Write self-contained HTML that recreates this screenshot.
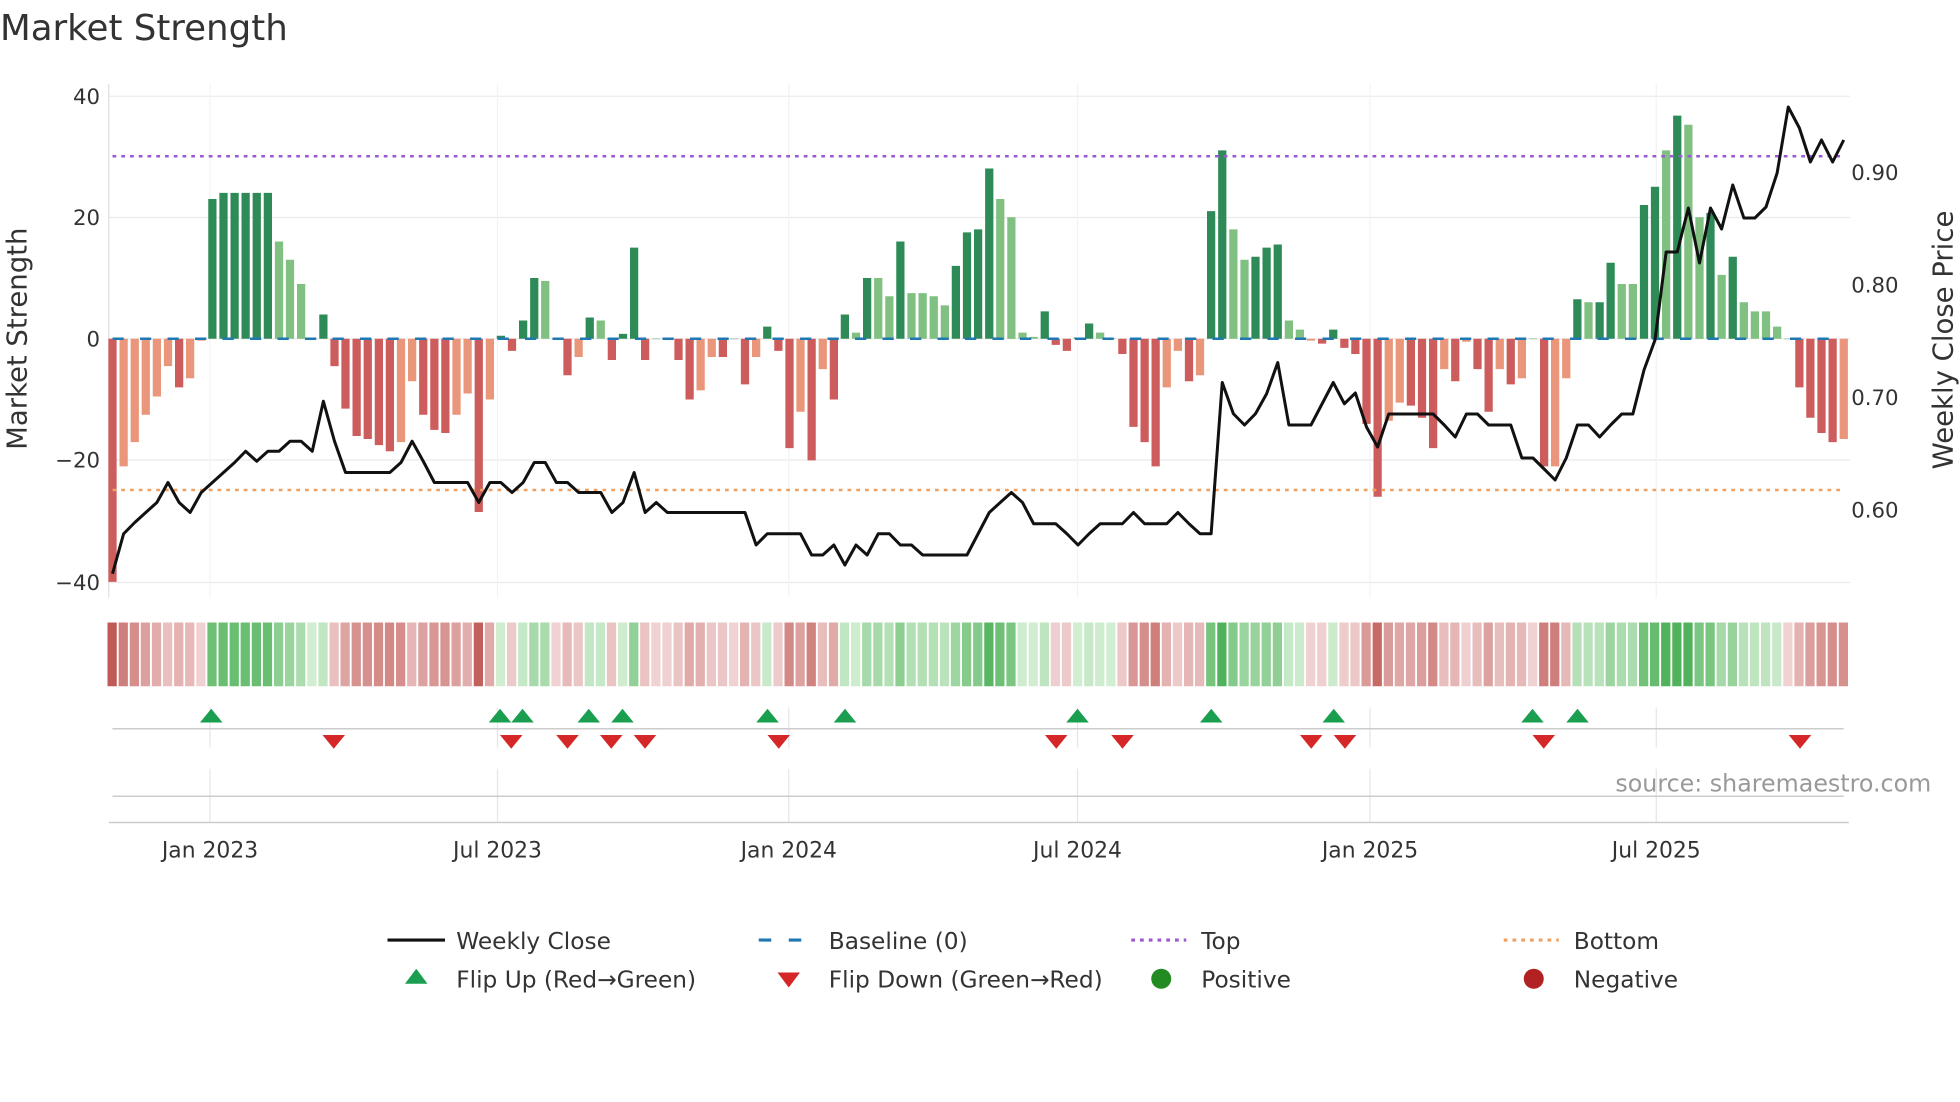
<!DOCTYPE html>
<html><head><meta charset="utf-8">
<style>
html,body{margin:0;padding:0;background:#fff;width:1960px;height:1102px;overflow:hidden}
svg{display:block;font-family:"DejaVu Sans","Liberation Sans",sans-serif}
</style></head>
<body>
<svg id="s" width="1960" height="1102" viewBox="0 0 1568 881.6" xmlns="http://www.w3.org/2000/svg">
<text x="0" y="32" font-size="28.5" fill="#333">Market Strength</text>
<g id="g"></g>
<text transform="translate(21,271) rotate(-90)" font-size="22" fill="#333" text-anchor="middle">Market Strength</text>
<text transform="translate(1562,272) rotate(-90)" font-size="22" fill="#333" text-anchor="middle">Weekly Close Price</text>
<g font-size="17" fill="#333" text-anchor="end">
<text x="80" y="83">40</text><text x="80" y="180">20</text><text x="80" y="277">0</text><text x="80" y="374">−20</text><text x="80" y="472">−40</text>
</g>
<g font-size="17" fill="#333">
<text x="1481" y="144">0.90</text><text x="1481" y="234">0.80</text><text x="1481" y="324">0.70</text><text x="1481" y="414">0.60</text>
</g>
<g font-size="17.5" fill="#333" text-anchor="middle">
<text x="168" y="686">Jan 2023</text><text x="398" y="686">Jul 2023</text><text x="631" y="686">Jan 2024</text><text x="862" y="686">Jul 2024</text><text x="1096" y="686">Jan 2025</text><text x="1325" y="686">Jul 2025</text>
</g>
<text x="1545" y="633" font-size="19" fill="#999" text-anchor="end">source: sharemaestro.com</text>
<g font-size="18.6" fill="#333">
<line x1="310" y1="752" x2="356" y2="752" stroke="#111" stroke-width="2.5"/>
<text x="365" y="759">Weekly Close</text>
<line x1="607" y1="752" x2="651" y2="752" stroke="#1f77b4" stroke-width="2.5" stroke-dasharray="10,14"/>
<text x="663" y="759">Baseline (0)</text>
<line x1="905" y1="752" x2="949" y2="752" stroke="#9b59d6" stroke-width="2.5" stroke-dasharray="3,4"/>
<text x="961" y="759">Top</text>
<line x1="1203" y1="752" x2="1247" y2="752" stroke="#f0a060" stroke-width="2.5" stroke-dasharray="3,4"/>
<text x="1259" y="759">Bottom</text>
<polygon points="333,775 324,787 342,787" fill="#1a9e50"/>
<text x="365" y="790">Flip Up (Red→Green)</text>
<polygon points="622,778 640,778 631,790" fill="#d62728"/>
<text x="663" y="790">Flip Down (Green→Red)</text>
<circle cx="929" cy="783" r="8" fill="#228b22"/>
<text x="961" y="790">Positive</text>
<circle cx="1227" cy="783" r="8" fill="#b22222"/>
<text x="1259" y="790">Negative</text>
</g>
</svg>
<script>
var v=[-40,-21,-17,-12.5,-9.5,-4.5,-8,-6.5,-0.3,23,
24,24,24,24,24,16,13,9,0.2,4,
-4.5,-11.5,-16,-16.5,-17.5,-18.5,-17,-7,-12.5,-15,
-15.5,-12.5,-9,-28.5,-10,0.5,-2,3,10,9.5,
0,-6,-3,3.5,3,-3.5,0.8,15,-3.5,0,
-0.2,-3.5,-10,-8.5,-3,-3,0,-7.5,-3,2,
-2,-18,-12,-20,-5,-10,4,1,10,10,
7,16,7.5,7.5,7,5.5,12,17.5,18,28,
23,20,1,0.3,4.5,-1,-2,0.2,2.5,1,
0.1,-2.5,-14.5,-17,-21,-8,-2,-7,-6,21,
31,18,13,13.5,15,15.5,3,1.5,-0.3,-0.8,
1.5,-1.5,
-2.5,-14,-26,-13.5,-10.5,-11,-13,-18,-5,-7,
-0.5,-5,-12,-5,-7.5,-6.5,0,-21,-21,-6.5,
6.5,6,6,12.5,9,9,22,25,31,36.7,
35.2,20,20.7,10.5,13.5,6,4.5,4.5,2,0,
-8,-13,-15.5,-17,-16.5];
var f="DLLLLLDLLD"+"DDDDDLLLLD"+"DDDDDDLLDD"+"DLLDLDDDDL"+"DDLDLDDDDD"+"LDDLLDDDLD"+"DDLDLDDLDL"+"LDLLLLDDDD"+"LLLLDDDDDL"+"LDDDDLLDLD"+"DLLDDDLLLD"+"DD"+"DDDLLDDDLD"+"LDDLDLDDLL"+"DLDDLLDDLD"+"LLDLDLLLLD"+"DDDDL";
var p=[459,427,418,410,402,386,402,410,394,386,
378,370,361,369,361,361,353,353,361,321,
353,378,378,378,378,378,370,353,369,386,
386,386,386,402,386,386,394,386,370,370,
386,386,394,394,394,410,402,378,410,402,
410,410,410,410,410,410,410,410,436,427,
427,427,427,444,444,436,452,436,444,427,
427,436,436,444,444,444,444,444,427,410,
402,394,402,419,419,419,427,436,427,419,
419,419,410,419,419,419,410,419,427,427,
306,331,340,331,315,290,340,340,340,323,306,323];
var q=[393,427,447,414,414,414,414,414,425,437,414,414,425,425,425,458,458,469,480,458,425,425,437,425,414,414,370,340,252,252,208,263,208,229,185,218,218,207,173,107,128,162,140,162,140];
q.forEach(function(y){p.push(y/1.25)});
var X=function(i){return 90+8.878*i};
var Y=function(u){return 271-u*4.8625};
var h='';
[77,174,271,368,466].forEach(function(y){h+='<line x1="87" y1="'+y+'" x2="1480" y2="'+y+'" stroke="#ebebeb" stroke-width="1"/>'});
[168,398,631,862,1096,1325].forEach(function(x){h+='<line x1="'+x+'" y1="67" x2="'+x+'" y2="478" stroke="#f3f3f3"/>';
h+='<line x1="'+x+'" y1="566" x2="'+x+'" y2="598" stroke="#e6e6e6"/><line x1="'+x+'" y1="615" x2="'+x+'" y2="658" stroke="#e6e6e6"/>'});
h+='<line x1="87" y1="67" x2="87" y2="478" stroke="#e0e0e0"/>';
h+='<line x1="90" y1="583" x2="1475" y2="583" stroke="#ccc" stroke-width="1.2"/><line x1="90" y1="637" x2="1475" y2="637" stroke="#ccc" stroke-width="1.2"/>';
h+='<line x1="87" y1="658" x2="1479" y2="658" stroke="#ccc" stroke-width="1.2"/>';
for(var i=0;i<v.length;i++){var u=v[i],d=f[i]=='D',x=X(i)-3.3,c;
 if(u>=0)c=d?'#2e8b57':'#80c080';else c=d?'#cd5c5c':'#e9967a';
 var y0=Y(0),y1=Y(u);h+='<rect x="'+x.toFixed(1)+'" y="'+Math.min(y0,y1).toFixed(1)+'" width="6.6" height="'+Math.max(Math.abs(y1-y0),0.3).toFixed(1)+'" fill="'+c+'"/>';
 var a=Math.min(Math.abs(u)/30,1),col;
 if(u>0){var r=Math.round(210-130*a),g=Math.round(238-60*a),b=Math.round(210-120*a);col='rgb('+r+','+g+','+b+')';}
 else{var r=Math.round(240-48*a),g=Math.round(210-120*a),b=Math.round(210-125*a);col='rgb('+r+','+g+','+b+')';}
 h+='<rect x="'+(X(i)-4).toFixed(1)+'" y="498" width="7.4" height="51" fill="'+col+'"/>';
}
h+='<line x1="90" y1="271" x2="1475" y2="271" stroke="#1f77b4" stroke-width="2" stroke-dasharray="9,13"/>';
h+='<line x1="90" y1="125" x2="1475" y2="125" stroke="#9b59d6" stroke-width="2" stroke-dasharray="3,4"/>';
h+='<line x1="90" y1="392" x2="1475" y2="392" stroke="#f0a060" stroke-width="2" stroke-dasharray="3,4"/>';
var pts=p.map(function(y,i){return X(i).toFixed(1)+','+y.toFixed(1)}).join(' ');
h+='<polyline points="'+pts+'" fill="none" stroke="#111" stroke-width="2.4" stroke-linejoin="round"/>';
[169,400,418,471,498,614,676,862,969,1067,1226,1262].forEach(function(x){h+='<polygon points="'+x+',567 '+(x-9)+',578 '+(x+9)+',578" fill="#1a9e50"/>'});
[267,409,454,489,516,623,845,898,1049,1076,1235,1440].forEach(function(x){h+='<polygon points="'+(x-9)+',588 '+(x+9)+',588 '+x+',599" fill="#d62728"/>'});
document.getElementById('g').innerHTML=h;
</script>
</body></html>
